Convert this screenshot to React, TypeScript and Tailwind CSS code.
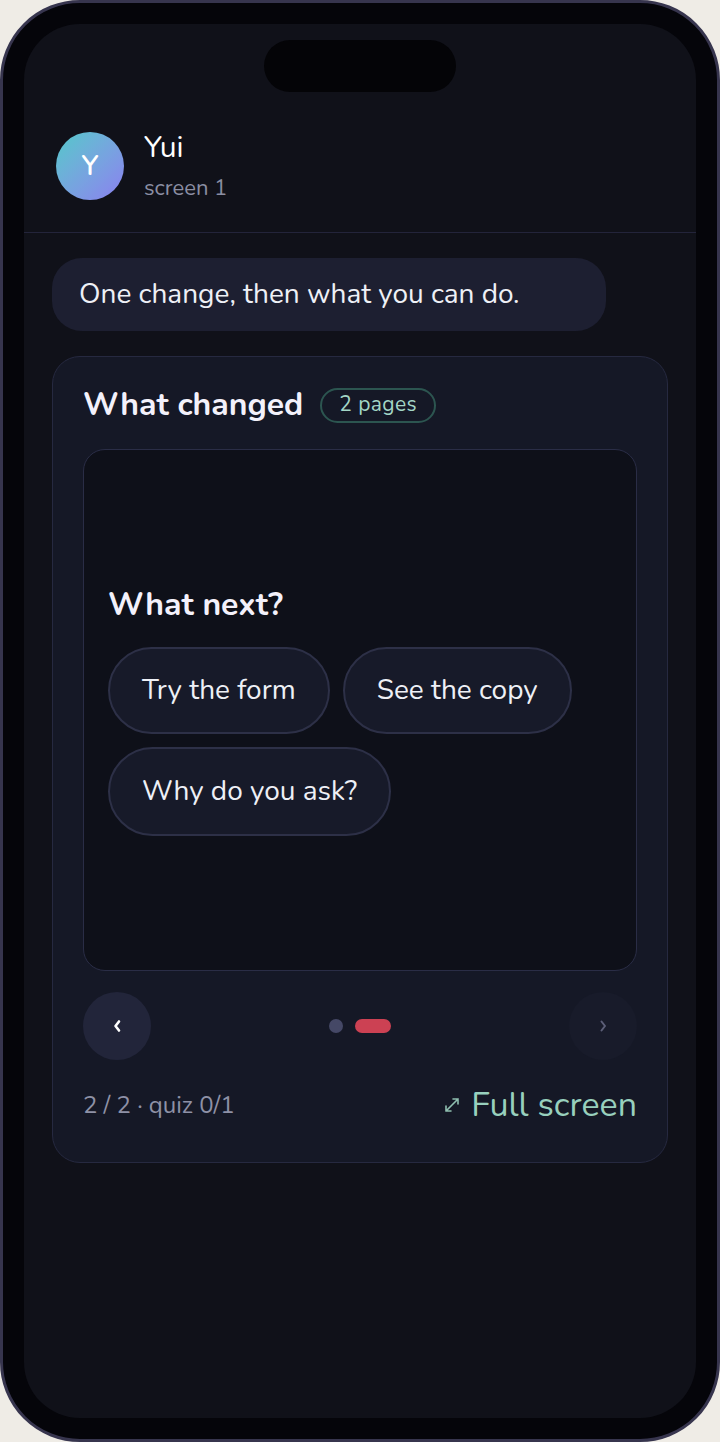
import React from "react";

const font = { fontFamily: "Nunito, 'Noto Sans', 'Open Sans', sans-serif" };

export default function App() {
  return (
    <div className="w-[720px] h-[1442px] bg-[#efece6]" style={font}>
      <div className="w-full h-full rounded-[80px] bg-[#05050a] border-[3px] border-[#37354e] p-[21px]">
        <div className="relative w-full h-full rounded-[56px] bg-[#101119] overflow-hidden flex flex-col">
          {/* notch */}
          <div className="absolute left-[240px] top-[16px] w-[192px] h-[52px] rounded-full bg-[#040407]" />

          {/* header */}
          <div className="flex items-center gap-[20px] pl-[32px] pt-[108px] pb-[32px] border-b border-[#23243a]">
            <div className="w-[68px] h-[68px] rounded-full bg-gradient-to-br from-[#4fc9c9] to-[#8a7ef0] flex items-center justify-center text-white text-[28px] font-semibold">
              Y
            </div>
            <div className="flex flex-col h-[68px]">
              <div className="text-white text-[30px] leading-[32px]">Yui</div>
              <div className="text-[#8b8ea3] text-[22px] leading-[24px] mt-[12px]">screen 1</div>
            </div>
          </div>

          {/* content */}
          <div className="flex flex-col px-[28px] pt-[25px]">
            <div className="w-[554px] rounded-[30px] bg-[#1d1f31] px-[27px] py-[18px] text-[#eef0f6] text-[28px] leading-[37px]">
              One change, then what you can do.
            </div>

            <div className="mt-[25px] rounded-[28px] bg-[#151826] border border-[#262940] px-[30px] pt-[28px] pb-[36px]">
              <div className="flex items-center gap-[17px] h-[40px]">
                <div className="text-[#f3f1fb] text-[32px] font-bold leading-[40px]">What changed</div>
                <div className="h-[35px] px-[17px] rounded-full border-2 border-[#2c5550] text-[#a3d6c6] text-[21px] flex items-center tracking-[0.4px]">
                  2 pages
                </div>
              </div>

              <div className="mt-[24px] h-[522px] rounded-[22px] bg-[#0e1019] border border-[#2a2d46] px-[24px] flex flex-col justify-center">
                <div className="text-[#f3f1fb] text-[32px] font-bold leading-[40px]">What next?</div>
                <div className="flex flex-wrap gap-[13px] mt-[22px]">
                  <div className="h-[87px] px-[32px] rounded-full border-2 border-[#2d3047] bg-[#171a29] text-[#eef0f6] text-[28px] flex items-center">
                    Try the form
                  </div>
                  <div className="h-[87px] px-[32px] rounded-full border-2 border-[#2d3047] bg-[#171a29] text-[#eef0f6] text-[28px] flex items-center">
                    See the copy
                  </div>
                  <div className="h-[89px] px-[32px] rounded-full border-2 border-[#2d3047] bg-[#171a29] text-[#eef0f6] text-[28px] flex items-center">
                    Why do you ask?
                  </div>
                </div>
              </div>

              <div className="mt-[21px] flex items-center justify-between">
                <div className="w-[68px] h-[68px] rounded-full bg-[#22253a] flex items-center justify-center">
                  <svg width="12" height="16" viewBox="0 0 12 16">
                    <path d="M8 3.5 L4.5 8 L8 12.5" stroke="#ffffff" strokeWidth="2.6" fill="none" strokeLinecap="round" strokeLinejoin="round" />
                  </svg>
                </div>
                <div className="flex items-center gap-[12px]">
                  <div className="w-[14px] h-[14px] rounded-full bg-[#454866]" />
                  <div className="w-[36px] h-[14px] rounded-full bg-[#cc4153]" />
                </div>
                <div className="w-[68px] h-[68px] rounded-full bg-[#181b2a] flex items-center justify-center">
                  <svg width="12" height="16" viewBox="0 0 12 16">
                    <path d="M4.5 3.5 L8 8 L4.5 12.5" stroke="#5c5f78" strokeWidth="2" fill="none" strokeLinecap="round" strokeLinejoin="round" />
                  </svg>
                </div>
              </div>

              <div className="mt-[24px] flex items-center justify-between">
                <div className="text-[#8e91a6] text-[24px] leading-[32px]">2 / 2 · quiz 0/1</div>
                <div className="flex items-center gap-[10px] text-[#98d0bd]">
                  <svg width="18" height="18" viewBox="0 0 18 18">
                    <path d="M3 15 L15 3 M10 3 H15 V8 M3 10 V15 H8" stroke="#8fbfb0" strokeWidth="1.6" fill="none" strokeLinecap="round" />
                  </svg>
                  <span className="text-[34px] leading-[42px]">Full screen</span>
                </div>
              </div>
            </div>
          </div>
        </div>
      </div>
    </div>
  );
}
